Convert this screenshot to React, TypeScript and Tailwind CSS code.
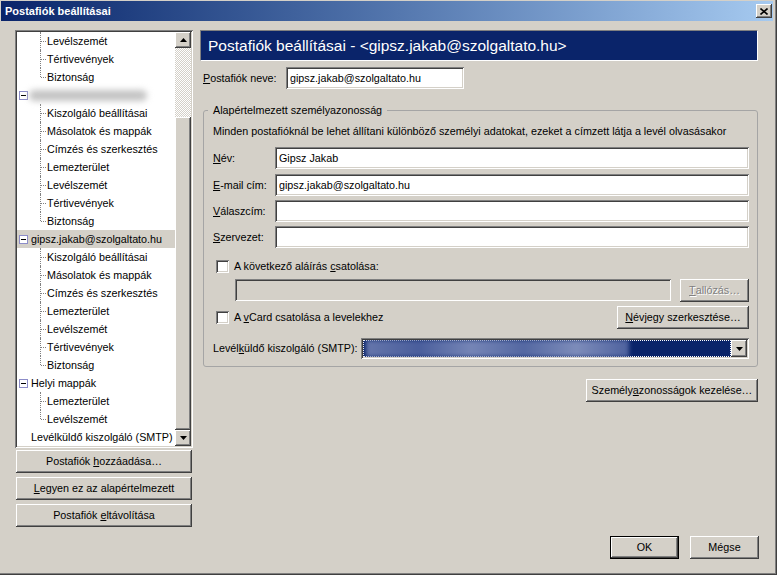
import type { ReactNode } from "react";

type TreeRow = {
  label: string;
  kind: "child" | "parent" | "top" | "blur";
  last?: boolean;
  selected?: boolean;
};

const accountChildren = (): TreeRow[] => [
  { label: "Kiszolgáló beállításai", kind: "child" },
  { label: "Másolatok és mappák", kind: "child" },
  { label: "Címzés és szerkesztés", kind: "child" },
  { label: "Lemezterület", kind: "child" },
  { label: "Levélszemét", kind: "child" },
  { label: "Tértivevények", kind: "child" },
  { label: "Biztonság", kind: "child", last: true },
];

const rows: TreeRow[] = [
  { label: "Levélszemét", kind: "child" },
  { label: "Tértivevények", kind: "child" },
  { label: "Biztonság", kind: "child", last: true },
  { label: "", kind: "blur" },
  ...accountChildren(),
  { label: "gipsz.jakab@szolgaltato.hu", kind: "parent", selected: true },
  ...accountChildren(),
  { label: "Helyi mappák", kind: "parent" },
  { label: "Lemezterület", kind: "child" },
  { label: "Levélszemét", kind: "child", last: true },
  { label: "Levélküldő kiszolgáló (SMTP)", kind: "top" },
];

const raised =
  "bg-[#d4d0c8] shadow-[inset_-1px_-1px_0_#404040,inset_1px_1px_0_#ffffff,inset_-2px_-2px_0_#808080,inset_2px_2px_0_#d4d0c8]";
const sunken =
  "shadow-[inset_1px_1px_0_#808080,inset_-1px_-1px_0_#ffffff,inset_2px_2px_0_#404040,inset_-2px_-2px_0_#d4d0c8]";

function Arrow({ up }: { up?: boolean }) {
  return (
    <svg width="7" height="4" viewBox="0 0 7 4">
      <polygon points={up ? "0,4 7,4 3.5,0" : "0,0 7,0 3.5,4"} fill="#000" />
    </svg>
  );
}

function Btn({ children, className = "", disabled }: { children: ReactNode; className?: string; disabled?: boolean }) {
  return (
    <button
      className={`flex h-[23px] items-center justify-center whitespace-nowrap ${raised} ${
        disabled ? "text-[#808080] [text-shadow:1px_1px_0_#ffffff]" : "text-black"
      } ${className}`}
    >
      {children}
    </button>
  );
}

function Field({ value, className = "" }: { value?: string; className?: string }) {
  return (
    <div className={`flex h-[22px] items-center bg-white pl-[4px] ${sunken} ${className}`}>{value}</div>
  );
}

function Check() {
  return <div className={`h-[13px] w-[13px] shrink-0 bg-white ${sunken}`} />;
}

function MinusBox() {
  return (
    <div className="ml-[2px] flex h-[9px] w-[9px] shrink-0 items-center justify-center border border-[#8c8cc8] bg-white">
      <div className="h-[1px] w-[5px] bg-black" />
    </div>
  );
}

function Tree() {
  return (
    <div className={`flex h-[418px] w-[178px] bg-white p-[2px] ${sunken}`}>
      <div className="min-w-0 flex-1 overflow-hidden">
        {rows.map((row, i) => {
          if (row.kind === "child") {
            return (
              <div key={i} className="flex h-[18px]">
                <div className="w-[23px] shrink-0" />
                <div className={`w-0 border-l border-dotted border-[#808080] ${row.last ? "h-[9px]" : "h-full"}`} />
                <div className="mt-[9px] h-0 w-[5px] border-t border-dotted border-[#808080]" />
                <span className="ml-[1px] leading-[18px]">{row.label}</span>
              </div>
            );
          }
          if (row.kind === "blur") {
            return (
              <div key={i} className="flex h-[18px] items-center">
                <MinusBox />
                <div className="ml-[1px] h-[11px] w-[118px] rounded-full bg-[#c4c4c4] blur-[3px]" />
              </div>
            );
          }
          if (row.kind === "parent") {
            return (
              <div key={i} className={`flex h-[18px] items-center ${row.selected ? "bg-[#d4d0c8]" : ""}`}>
                <MinusBox />
                <span className="ml-[3px]">{row.label}</span>
              </div>
            );
          }
          return (
            <div key={i} className="flex h-[18px] items-center pl-[14px]">
              {row.label}
            </div>
          );
        })}
      </div>
      <div className="flex w-[16px] flex-col">
        <div className={`flex h-[16px] items-center justify-center ${raised}`}>
          <Arrow up />
        </div>
        <div className="h-[69px] bg-[repeating-conic-gradient(#ffffff_0_25%,#d4d0c8_0_50%)] bg-[length:2px_2px]" />
        <div className={`flex-1 ${raised}`} />
        <div className={`flex h-[16px] items-center justify-center ${raised}`}>
          <Arrow />
        </div>
      </div>
    </div>
  );
}

export default function App() {
  return (
    <div className="h-[575px] w-[777px] overflow-hidden whitespace-nowrap bg-[#d4d0c8] pl-[1px] pt-[1px] font-['Liberation_Sans',sans-serif] text-[10.75px] text-black shadow-[inset_-1px_-1px_0_#404040,inset_-2px_-2px_0_#808080]">
      {/* title bar */}
      <div className="flex h-[20px] w-[772px] items-center justify-between bg-gradient-to-r from-[#0a246a] to-[#a6caf0] pl-[4px] pr-[1px]">
        <span className="text-[11px] font-bold text-white">Postafiók beállításai</span>
        <div className={`flex h-[14px] w-[16px] items-center justify-center ${raised}`}>
          <svg width="8" height="7" viewBox="0 0 8 7">
            <path d="M0.5 0.5 L7.5 6.5 M7.5 0.5 L0.5 6.5" stroke="#000" strokeWidth="1.6" />
          </svg>
        </div>
      </div>

      <div className="flex h-[506px] gap-[7px] pl-[14px] pt-[9px]">
        {/* left column */}
        <div className="flex w-[178px] flex-col">
          <Tree />
          <div className="ml-[1px] mt-[2px] flex w-[176px] flex-col gap-[4px]">
            <Btn>
              Postafiók&nbsp;<u>h</u>ozzáadása…
            </Btn>
            <Btn>
              <u>L</u>egyen ez az alapértelmezett
            </Btn>
            <Btn>
              Postafiók&nbsp;<u>e</u>ltávolítása
            </Btn>
          </div>
        </div>

        {/* right column */}
        <div className="flex w-[558px] flex-col">
          <div className="flex h-[31px] items-center border border-b-white border-l-[#808080] border-r-white border-t-[#808080] bg-[#0a246a] pl-[7px] text-[15.5px] text-white">
            Postafiók beállításai - &lt;gipsz.jakab@szolgaltato.hu&gt;
          </div>

          <div className="mt-[6px] flex h-[22px] items-center">
            <span className="w-[86px] pl-[3px]">
              <u>P</u>ostafiók neve:
            </span>
            <Field value="gipsz.jakab@szolgaltato.hu" className="w-[178px]" />
          </div>

          <fieldset className="ml-[3px] mt-[14px] w-[555px] rounded-[3px] border border-[#a5a5a5] pb-[7px] pl-[9px] pr-[8px]">
            <legend className="ml-[-5px] px-[5px] leading-[14px]">Alapértelmezett személyazonosság</legend>
            <div className="mt-[7px] h-[14px] leading-[14px]">
              Minden postafióknál be lehet állítani különböző személyi adatokat, ezeket a címzett látja a levél olvasásakor
            </div>

            <div className="mt-[9px] flex h-[22px] items-center">
              <span className="w-[62px]">
                <u>N</u>év:
              </span>
              <Field value="Gipsz Jakab" className="flex-1" />
            </div>
            <div className="mt-[5px] flex h-[22px] items-center">
              <span className="w-[62px]">
                <u>E</u>-mail cím:
              </span>
              <Field value="gipsz.jakab@szolgaltato.hu" className="flex-1" />
            </div>
            <div className="mt-[4px] flex h-[22px] items-center">
              <span className="w-[62px]">
                <u>V</u>álaszcím:
              </span>
              <Field className="flex-1" />
            </div>
            <div className="mt-[4px] flex h-[22px] items-center">
              <span className="w-[62px]">
                <u>S</u>zervezet:
              </span>
              <Field className="flex-1" />
            </div>

            <div className="mt-[12px] flex h-[13px] items-center gap-[5px] pl-[3px]">
              <Check />
              <span>
                A következő aláírás <u>c</u>satolása:
              </span>
            </div>
            <div className="mt-[5px] flex h-[24px] items-center justify-between pl-[22px]">
              <div className={`h-[22px] w-[436px] bg-[#d4d0c8] ${sunken}`} />
              <Btn disabled className="w-[69px]">
                <u>T</u>allózás…
              </Btn>
            </div>
            <div className="mt-[3px] flex h-[24px] items-center justify-between pl-[3px]">
              <div className="flex items-center gap-[5px]">
                <Check />
                <span>
                  A <u>v</u>Card csatolása a levelekhez
                </span>
              </div>
              <Btn className="w-[132px]">
                <u>N</u>évjegy szerkesztése…
              </Btn>
            </div>
            <div className="mt-[9px] flex h-[21px] items-center justify-between">
              <span>
                Levél<u>k</u>üldő kiszolgáló (SMTP):
              </span>
              <div className={`flex h-[21px] w-[388px] bg-white p-[2px] ${sunken}`}>
                <div className="flex flex-1 overflow-hidden bg-[#0a246a] outline-1 -outline-offset-1 outline-dotted outline-[#ffffff]">
                  <div className="ml-[3px] h-full w-[263px] bg-[linear-gradient(90deg,#6576ab,#4a5e9c_20%,#7585b6_40%,#5468a2_60%,#7d8cba_80%,#4d619e)] blur-[2px]" />
                </div>
                <div className={`flex w-[16px] items-center justify-center ${raised}`}>
                  <Arrow />
                </div>
              </div>
            </div>
          </fieldset>

          <div className="mt-[12px] flex justify-end">
            <Btn className="w-[172px]">
              Személy<u>a</u>zonosságok kezelése…
            </Btn>
          </div>
        </div>
      </div>

      <div className="mt-[9px] flex justify-end gap-[11px] pr-[18px]">
        <button
          className={`flex h-[23px] w-[69px] items-center justify-center border border-black ${raised}`}
        >
          OK
        </button>
        <Btn className="w-[69px]">Mégse</Btn>
      </div>
    </div>
  );
}
